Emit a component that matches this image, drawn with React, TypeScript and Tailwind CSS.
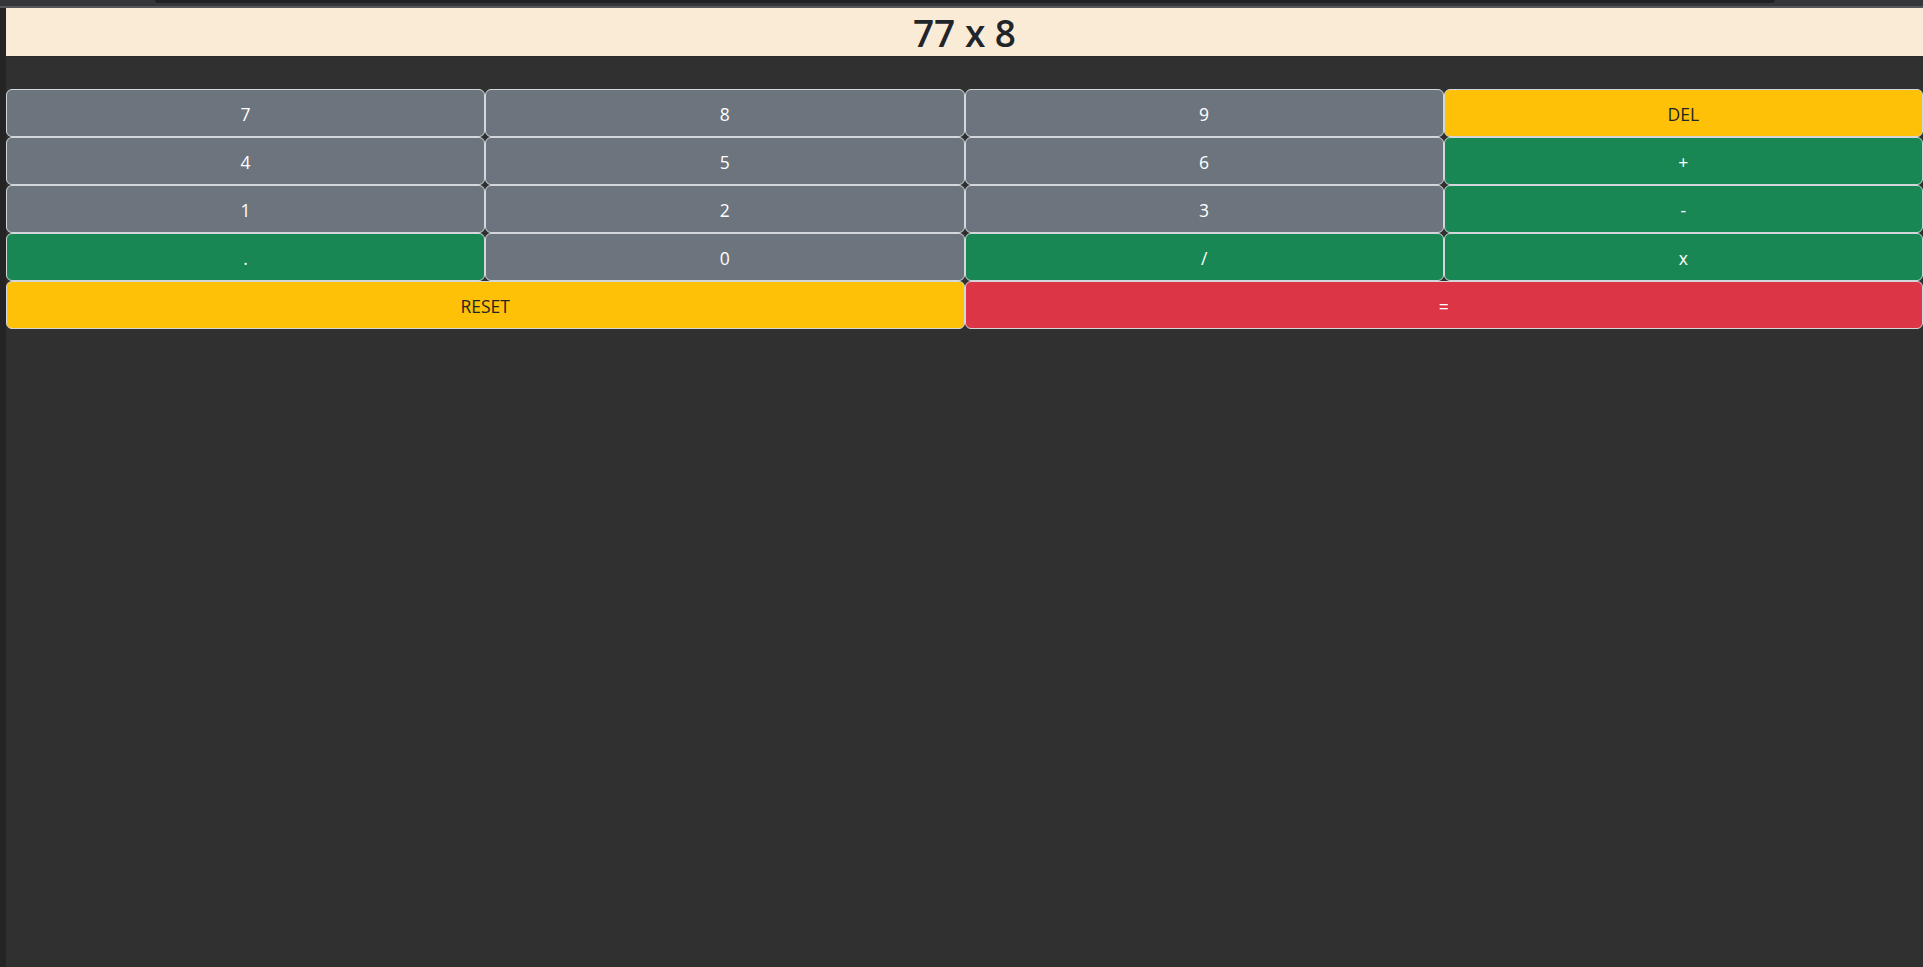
import React from "react";

type B = { label: string; cls: string; span?: boolean };

const gray = "bg-[#6c757d] text-white";
const green = "bg-[#198754] text-white";
const yellow = "bg-[#ffc107] text-[#212529]";
const red = "bg-[#dc3545] text-white";

const buttons: B[] = [
  { label: "7", cls: gray },
  { label: "8", cls: gray },
  { label: "9", cls: gray },
  { label: "DEL", cls: yellow },
  { label: "4", cls: gray },
  { label: "5", cls: gray },
  { label: "6", cls: gray },
  { label: "+", cls: green },
  { label: "1", cls: gray },
  { label: "2", cls: gray },
  { label: "3", cls: gray },
  { label: "-", cls: green },
  { label: ".", cls: green },
  { label: "0", cls: gray },
  { label: "/", cls: green },
  { label: "x", cls: green },
  { label: "RESET", cls: yellow, span: true },
  { label: "=", cls: red, span: true },
];

export default function App() {
  return (
    <div className="min-h-screen w-full bg-[#303030] flex flex-col" style={{ fontFamily: "'Open Sans', 'Noto Sans', sans-serif" }}>
      <div className="h-[8px] w-full bg-[#35363a] relative shrink-0">
        <div className="absolute left-[155px] right-[148px] top-0 h-[3px] bg-[#202124] rounded-b-[6px]" />
        <div className="absolute left-0 right-0 bottom-0 h-[2px] bg-[#56575b]" />
      </div>
      <div className="flex flex-1">
        <div className="w-[6px] bg-[#242424] shrink-0" />
        <div className="flex-1 flex flex-col">
          <div className="h-[49px] bg-[#faebd7] border-b border-[#2a2a2a] flex items-center justify-center text-[#212529] text-[37px] font-semibold leading-none">
            77 x 8
          </div>
          <div className="mt-[32px] grid grid-cols-4">
            {buttons.map((b, i) => (
              <button
                key={i}
                className={`${b.cls} ${b.span ? "col-span-2" : ""} h-[48px] pt-[2px] border border-[#d3d7db] rounded-[6px] text-[17.5px] flex items-center justify-center`}
              >
                {b.label}
              </button>
            ))}
          </div>
        </div>
      </div>
    </div>
  );
}
